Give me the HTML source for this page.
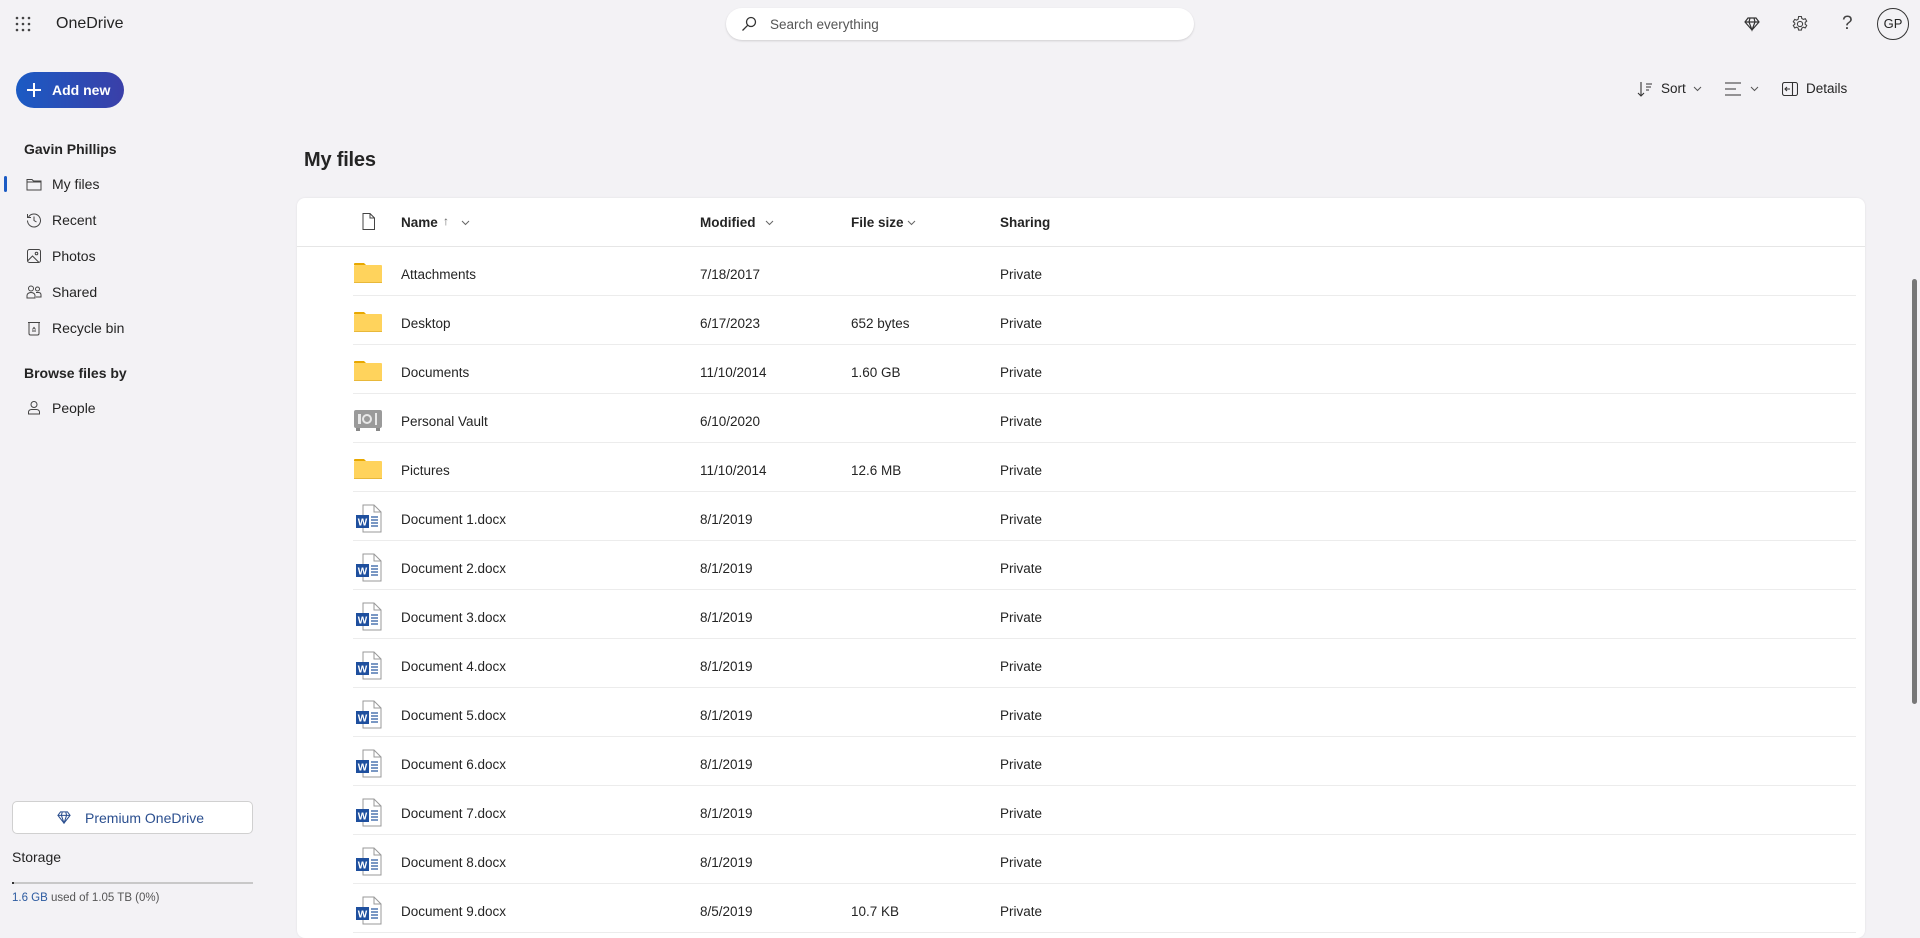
<!DOCTYPE html>
<html><head><meta charset="utf-8"><style>
*{box-sizing:border-box;margin:0;padding:0}
body{width:1920px;height:929px;overflow:hidden;background:#f3f2f5;font-family:"Liberation Sans",sans-serif;color:#242424;position:relative;font-size:14px}
.abs{position:absolute}
.t{position:absolute;white-space:nowrap;line-height:1}
.nav svg{position:absolute}
.row{position:absolute;left:56px;right:9px;height:49px;border-bottom:1px solid #ececec}
.row .t{top:21px;font-size:13.5px}
.hdr .t{font-weight:bold;font-size:13.5px}
</style></head><body>
<svg class="abs" style="left:15px;top:16px" width="16" height="16" viewBox="0 0 16 16" fill="#444"><circle cx="2" cy="2" r="1.3"/><circle cx="8" cy="2" r="1.3"/><circle cx="14" cy="2" r="1.3"/><circle cx="2" cy="8" r="1.3"/><circle cx="8" cy="8" r="1.3"/><circle cx="14" cy="8" r="1.3"/><circle cx="2" cy="14" r="1.3"/><circle cx="8" cy="14" r="1.3"/><circle cx="14" cy="14" r="1.3"/></svg>
<div class="t" style="left:56px;top:16px;font-size:16px">OneDrive</div>
<div class="abs" style="left:726px;top:8px;width:468px;height:32px;background:#fff;border-radius:16px;box-shadow:0 1px 2px rgba(0,0,0,.15)"></div>
<svg class="abs" style="left:741px;top:16px" width="16" height="16" viewBox="0 0 16 16" fill="none" stroke="#333" stroke-width="1.3"><circle cx="10" cy="6" r="4.5"/><path d="M6.8 9.2L1.5 14.5"/></svg>
<div class="t" style="left:770px;top:18px;font-size:13.5px;color:#555">Search everything</div>
<svg class="abs" style="left:1744px;top:16px" width="16" height="16" viewBox="0 0 16 16" fill="none" stroke="#333" stroke-width="1.2"><path d="M4 2h8l3 4-7 8-7-8z M1 6h14 M6 2L5 6l3 8 3-8-1-4"/></svg>
<svg class="abs" style="left:1791px;top:15px" width="18" height="18" viewBox="0 0 18 18" fill="none" stroke="#444" stroke-width="1.1"><circle cx="9" cy="9" r="2.6"/><path d="M7.6 1.5h2.8l.4 2 1.6.9 1.9-.7 1.4 2.4-1.5 1.3v1.8l1.5 1.3-1.4 2.4-1.9-.7-1.6.9-.4 2H7.6l-.4-2-1.6-.9-1.9.7-1.4-2.4 1.5-1.3V8.1L2.3 6.8l1.4-2.4 1.9.7 1.6-.9z"/></svg>
<div class="t" style="left:1842px;top:14px;font-size:19px;color:#444">?</div>
<div class="abs" style="left:1877px;top:8px;width:32px;height:32px;border:1px solid #333;border-radius:50%;font-size:13px;text-align:center;line-height:30px">GP</div>
<div class="abs" style="left:16px;top:72px;width:108px;height:36px;border-radius:18px;background:linear-gradient(90deg,#1b5bc4,#3a3fa8)"></div>
<svg class="abs" style="left:27px;top:83px" width="14" height="14" viewBox="0 0 14 14" stroke="#fff" stroke-width="2"><path d="M7 0v14M0 7h14"/></svg>
<div class="t" style="left:52px;top:83px;color:#fff;font-weight:bold;font-size:14px">Add new</div>
<div class="t" style="left:24px;top:142px;font-weight:bold;font-size:14px">Gavin Phillips</div>
<div class="abs" style="left:4px;top:176px;width:3px;height:16px;background:#1b5bc4;border-radius:2px"></div>
<div class="nav">
<svg style="left:26px;top:176px" width="16" height="16" viewBox="0 0 16 16" fill="none" stroke="#444" stroke-width="1"><path d="M1 3.5h5l1.5 1.5H15v9H1z M1 6h14"/></svg>
<div class="t" style="left:52px;top:177px">My files</div>
<svg style="left:26px;top:212px" width="16" height="16" viewBox="0 0 16 16" fill="none" stroke="#444" stroke-width="1"><path d="M2.5 5A6.5 6.5 0 1 1 1.5 8.5M1.5 2v3.5H5M8 4.5v4l2.5 1.5"/></svg>
<div class="t" style="left:52px;top:213px">Recent</div>
<svg style="left:26px;top:248px" width="16" height="16" viewBox="0 0 16 16" fill="none" stroke="#444" stroke-width="1"><rect x="1.5" y="1.5" width="13" height="13" rx="2"/><circle cx="10.5" cy="5.5" r="1.3"/><path d="M1.5 13l5-5 6.5 6.5"/></svg>
<div class="t" style="left:52px;top:249px">Photos</div>
<svg style="left:26px;top:284px" width="16" height="16" viewBox="0 0 16 16" fill="none" stroke="#444" stroke-width="1"><circle cx="5" cy="4.5" r="2.5"/><circle cx="11.5" cy="5" r="2"/><path d="M1 14v-2.5c0-1.5 1.5-3 4-3s4 1.5 4 3V14zM10 8.5h2.5c1.5 0 2.5 1 2.5 2.5v2h-5"/></svg>
<div class="t" style="left:52px;top:285px">Shared</div>
<svg style="left:26px;top:320px" width="16" height="16" viewBox="0 0 16 16" fill="none" stroke="#444" stroke-width="1"><path d="M2 2.5h12M3 2.5v11a1.5 1.5 0 0 0 1.5 1.5h7A1.5 1.5 0 0 0 13 13.5v-11M6.5 9.5l1.5-2 1.5 2M6 11h4"/></svg>
<div class="t" style="left:52px;top:321px">Recycle bin</div>
<div class="t" style="left:24px;top:366px;font-weight:bold">Browse files by</div>
<svg style="left:26px;top:400px" width="16" height="16" viewBox="0 0 16 16" fill="none" stroke="#444" stroke-width="1"><circle cx="8" cy="4.5" r="3"/><path d="M2.5 14v-2c0-1.5 1.5-2.5 3-2.5h5c1.5 0 3 1 3 2.5v2z"/></svg>
<div class="t" style="left:52px;top:401px">People</div>
</div>
<div class="abs" style="left:12px;top:801px;width:241px;height:33px;border:1px solid #d0d0d0;border-radius:5px;background:#fff"></div>
<svg class="abs" style="left:57px;top:811px" width="14" height="13" viewBox="0 0 16 15" fill="none" stroke="#2b4f8f" stroke-width="1.2"><path d="M4 1h8l3 4-7 9-7-9z M1 5h14 M6 1L5 5l3 9 3-9-1-4"/></svg>
<div class="t" style="left:85px;top:811px;color:#2b4f8f;font-size:14px">Premium OneDrive</div>
<div class="t" style="left:12px;top:850px;font-size:14px">Storage</div>
<div class="abs" style="left:12px;top:882px;width:241px;height:2px;background:#c8c8c8"></div>
<div class="abs" style="left:12px;top:882px;width:2px;height:2px;background:#333"></div>
<div class="t" style="left:12px;top:893px;font-size:11.5px;color:#555"><span style="color:#2b5aa0">1.6 GB</span> used of 1.05 TB (0%)</div>
<svg class="abs" style="left:1637px;top:81px" width="16" height="16" viewBox="0 0 16 16" fill="none" stroke="#333" stroke-width="1.1"><path d="M4 1v14M1 12l3 3 3-3M9 3h6M9 6h5M9 9h3"/></svg>
<div class="t" style="left:1661px;top:82px;font-size:13.5px">Sort</div>
<svg class="abs" style="left:1693px;top:86px" width="9" height="6" viewBox="0 0 9 6" fill="none" stroke="#555"><path d="M1 1l3.5 3.5L8 1"/></svg>
<svg class="abs" style="left:1725px;top:82px" width="16" height="14" viewBox="0 0 16 14" stroke="#333" stroke-width="1.1"><path d="M0 1h16M0 7h11M0 13h16"/></svg>
<svg class="abs" style="left:1750px;top:86px" width="9" height="6" viewBox="0 0 9 6" fill="none" stroke="#555"><path d="M1 1l3.5 3.5L8 1"/></svg>
<svg class="abs" style="left:1782px;top:82px" width="16" height="14" viewBox="0 0 16 14" fill="none" stroke="#333" stroke-width="1.1"><rect x="0.5" y="0.5" width="15" height="13" rx="2"/><path d="M10.5 1v12M8 7H3M5 5L3 7l2 2"/></svg>
<div class="t" style="left:1806px;top:82px;font-size:13.5px">Details</div>
<div class="t" style="left:304px;top:150px;font-size:20px;font-weight:bold;color:#242424;letter-spacing:-.2px">My files</div>
<div class="abs" style="left:297px;top:198px;width:1568px;height:740px;background:#fff;border-radius:8px;box-shadow:0 0 2px rgba(0,0,0,.08)">
<div class="hdr abs" style="left:0;top:0;width:100%;height:49px;border-bottom:1px solid #e6e6e6">
<svg class="abs" style="left:65px;top:15px" width="13" height="17" viewBox="0 0 13 17" fill="none" stroke="#444"><path d="M1 .5h7l4.5 4.5v11.5H1zM8 .5V5h4.5"/></svg>
<div class="t" style="left:104px;top:18px">Name</div>
<div class="t" style="left:146px;top:17px;font-weight:normal;color:#666;font-size:12px">↑</div>
<svg class="abs" style="left:164px;top:22px" width="9" height="6" viewBox="0 0 9 6" fill="none" stroke="#666"><path d="M1 1l3.5 3.5L8 1"/></svg>
<div class="t" style="left:403px;top:18px">Modified</div>
<svg class="abs" style="left:468px;top:22px" width="9" height="6" viewBox="0 0 9 6" fill="none" stroke="#666"><path d="M1 1l3.5 3.5L8 1"/></svg>
<div class="t" style="left:554px;top:18px">File size</div>
<svg class="abs" style="left:610px;top:22px" width="9" height="6" viewBox="0 0 9 6" fill="none" stroke="#666"><path d="M1 1l3.5 3.5L8 1"/></svg>
<div class="t" style="left:703px;top:18px">Sharing</div>
</div>
<div id="rows"></div>
</div>
<div class="abs" style="left:1912px;top:279px;width:5px;height:425px;background:#777;border-radius:3px"></div>
<script>
var folder='<svg class="abs" style="left:0;top:15px" width="30" height="22" viewBox="0 0 30 22"><path d="M1 2a1 1 0 0 1 1-1h9l2 2H1z" fill="#e8a800"/><rect x="1" y="3" width="28" height="18" rx="1" fill="#ffd35c"/><rect x="1" y="20" width="28" height="1" fill="#e8b83a"/></svg>';
var vault='<svg class="abs" style="left:0;top:14px" width="30" height="24" viewBox="0 0 30 24"><rect x="1" y="2" width="28" height="18" rx="2" fill="#9a9a9a"/><rect x="3" y="20" width="4" height="3" fill="#888"/><rect x="23" y="20" width="4" height="3" fill="#888"/><rect x="5" y="6" width="3" height="10" fill="#e8e8e8"/><circle cx="14" cy="11" r="4" fill="none" stroke="#e8e8e8" stroke-width="2"/><path d="M23 5v12" stroke="#e8e8e8" stroke-width="2"/></svg>';
var word='<svg class="abs" style="left:2px;top:12px" width="30" height="30" viewBox="0 0 30 30"><path d="M8 1h11l7 7v20H8z" fill="#fff" stroke="#999"/><path d="M19 1v7h7" fill="none" stroke="#999"/><path d="M16 13h7M16 16h7M16 19h7M16 22h7" stroke="#2b5aa0" stroke-width="1.2"/><rect x="1" y="11" width="13" height="13" fill="#1e4f9e"/><text x="7.5" y="21.5" font-size="10" font-weight="bold" fill="#fff" text-anchor="middle" font-family="Liberation Sans,sans-serif">W</text></svg>';
var d=[[folder,'Attachments','7/18/2017',''],[folder,'Desktop','6/17/2023','652 bytes'],[folder,'Documents','11/10/2014','1.60 GB'],[vault,'Personal Vault','6/10/2020',''],[folder,'Pictures','11/10/2014','12.6 MB']];
for(var i=1;i<=8;i++)d.push([word,'Document '+i+'.docx','8/1/2019','']);
d.push([word,'Document 9.docx','8/5/2019','10.7 KB']);
var h='';
d.forEach(function(r,i){h+='<div class="row" style="top:'+(49+i*49)+'px">'+r[0]+'<div class="t" style="left:48px">'+r[1]+'</div><div class="t" style="left:347px">'+r[2]+'</div><div class="t" style="left:498px">'+r[3]+'</div><div class="t" style="left:647px">Private</div></div>';});
document.getElementById('rows').innerHTML=h;
</script>
</body></html>
